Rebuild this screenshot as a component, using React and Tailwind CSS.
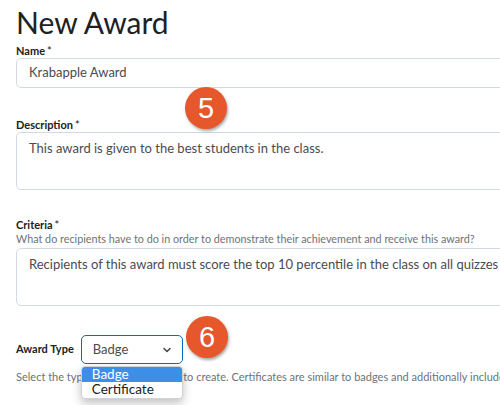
function Marker({ n, className }) {
  return (
    <div
      className={`absolute flex h-[42px] w-[42px] items-center justify-center rounded-full bg-[#e6572b] text-[29px] leading-none text-white shadow-[1px_2px_3px_rgba(0,0,0,0.35)] ${className}`}
      style={{ fontFamily: "Arial, 'Liberation Sans', sans-serif" }}
    >
      {n}
    </div>
  );
}

function Label({ children }) {
  return (
    <div className="text-[11px] font-bold leading-[12px] text-[#202122]">
      {children}
      <span className="ml-[2px] font-normal">*</span>
    </div>
  );
}

export default function App() {
  return (
    <div
      className="relative h-[405px] w-[500px] overflow-hidden bg-white pl-4 text-[#494c4e]"
      style={{ fontFamily: "Lato, 'Open Sans', sans-serif" }}
    >
      <h1 className="pt-[4px] text-[30px] leading-[36px] text-[#202122]">New Award</h1>

      <div className="mt-[5px]">
        <Label>Name</Label>
        <div className="mt-[1px] flex h-[30px] w-[520px] items-center rounded-[5px] border border-[#d3d9e3] px-3 text-[13px]">
          Krabapple Award
        </div>
      </div>

      <div className="mt-[31px]">
        <Label>Description</Label>
        <div className="mt-[1px] h-[58px] w-[520px] rounded-[5px] border border-[#d3d9e3] px-3 pt-[6px] text-[13px] leading-[18px]">
          This award is given to the best students in the class.
        </div>
      </div>

      <div className="mt-[29px]">
        <Label>Criteria</Label>
        <div className="mt-[1px] whitespace-nowrap text-[10.8px] leading-[13px] text-[#6e7376]">
          What do recipients have to do in order to demonstrate their achievement and receive this award?
        </div>
        <div className="mt-[3px] h-[58px] w-[520px] whitespace-nowrap rounded-[5px] border border-[#d3d9e3] px-3 pt-[6px] text-[13px] leading-[18px]">
          Recipients of this award must score the top 10 percentile in the class on all quizzes and assignments.
        </div>
      </div>

      <div className="mt-[29px] flex items-center gap-[7px]">
        <div className="text-[11px] font-bold text-[#202122]">Award Type</div>
        <div className="relative">
          <div className="flex h-[29px] w-[102px] items-center justify-between rounded-[5px] border-[1.5px] border-[#006fbf] pl-[11px] pr-[10px] text-[13px]">
            <span>Badge</span>
            <svg width="10" height="6" viewBox="0 0 10 6" fill="none">
              <path d="M2 1.5 5 4.5 8 1.5" stroke="#494c4e" strokeWidth="1.6" strokeLinecap="round" strokeLinejoin="round" />
            </svg>
          </div>
          <div className="absolute left-0 top-[31px] z-10 w-[102px] overflow-hidden rounded-[4px] border border-[#cfd3d6] bg-white text-[13.5px] leading-[15px] text-[#202122] shadow-[0_4px_10px_rgba(0,0,0,0.25)]">
            <div className="bg-[#3d8ee6] pl-[10px] text-white">Badge</div>
            <div className="pl-[10px] pb-[1px]">Certificate</div>
          </div>
        </div>
      </div>

      <div className="mt-[6px] whitespace-nowrap text-[11px] leading-[14px] text-[#6e7376]">
        Select the type of award you want to create. Certificates are similar to badges and additionally include a certificate.
      </div>

      <Marker n="5" className="left-[185px] top-[87px]" />
      <Marker n="6" className="left-[186px] top-[316px]" />
    </div>
  );
}
